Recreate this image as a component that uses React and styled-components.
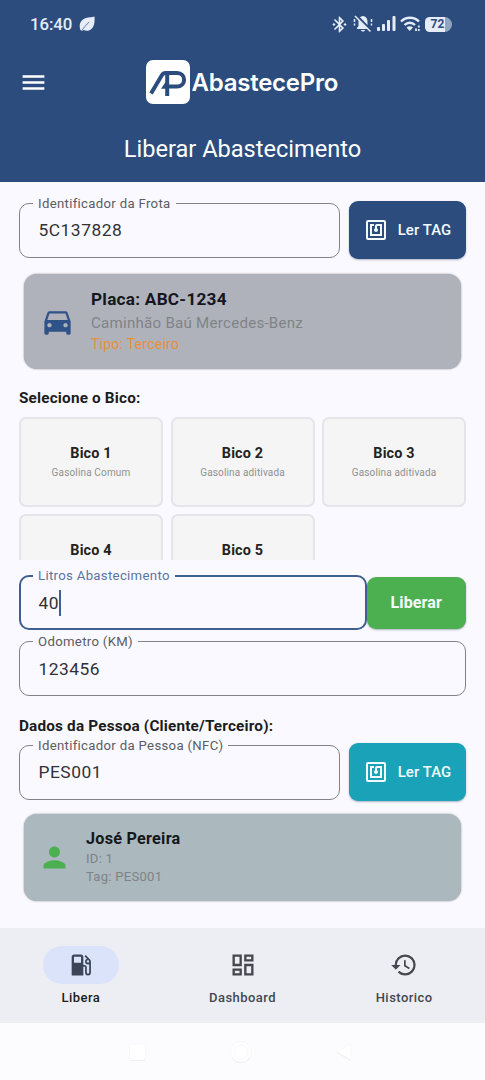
import React from 'react'
import styled, { createGlobalStyle } from 'styled-components'
import {
	MdBluetoothConnected,
	MdDirectionsCar,
	MdHistory,
	MdLocalGasStation,
	MdMenu,
	MdNfc,
	MdOutlineDashboard,
	MdPerson,
} from 'react-icons/md'

const GlobalStyle = createGlobalStyle`
	* { box-sizing: border-box; }
	body { margin: 0; background: #faf9ff; }
	button, input { font-family: inherit; }
`

const Screen = styled.div`
	width: 485px;
	height: 1080px;
	display: flex;
	flex-direction: column;
	overflow: hidden;
	background: #faf9ff;
	color: #1b1c20;
	font-family: Roboto, sans-serif;
`

const Header = styled.header`
	height: 182px;
	flex: none;
	background: #2b4c7c;
	color: #fff;
`

const StatusBar = styled.div`
	height: 48px;
	padding: 0 33px 0 30px;
	display: flex;
	align-items: center;
	justify-content: space-between;
	color: #e6edf8;
`

const Clock = styled.div`
	display: flex;
	align-items: center;
	gap: 7px;
	font-size: 16.8px;
	font-weight: 500;
	line-height: 20px;
	letter-spacing: -0.1px;
`

const StatusIcons = styled.div`
	display: flex;
	align-items: center;
	gap: 4px;

	svg { display: block; }
`

const Battery = styled.div`
	width: 27px;
	height: 15px;
	padding-right: 2px;
	display: flex;
	align-items: center;
	justify-content: center;
	border-radius: 5px 8px 8px 5px;
	background: linear-gradient(90deg, #e6edf8 20px, #91a4c0 20px);
	color: #2b4c7c;
	font-size: 12px;
	font-weight: 700;
`

const Toolbar = styled.div`
	height: 68px;
	padding-left: 19px;
	display: flex;
	align-items: center;
`

const MenuButton = styled.button`
	width: 29px;
	height: 29px;
	padding: 0;
	border: 0;
	background: none;
	color: #fff;
	font-size: 29px;

	svg { display: block; }
`

const Brand = styled.div`
	margin-left: 97.5px;
	display: flex;
	align-items: center;
	gap: 2px;
	font-family: Inter, sans-serif;
	font-size: 24px;
	font-weight: 600;
	letter-spacing: -0.25px;
	white-space: nowrap;

	svg { display: block; }
`

const PageTitle = styled.h1`
	margin: 0;
	padding-top: 17px;
	font-size: 23.6px;
	font-weight: 400;
	line-height: 32px;
	text-align: center;
`

const Content = styled.main`
	height: 746px;
	flex: none;
	padding: 19px 19px 0;
`

const Row = styled.div`
	display: flex;
	align-items: center;
	gap: ${({ $gap }) => $gap || 0}px;
	margin-top: ${({ $top }) => $top || 0}px;
`

const FieldBox = styled.label`
	position: relative;
	flex: 1;
	height: 55px;
	padding: 0 ${({ $focused }) => ($focused ? 17.5 : 18.5)}px;
	display: flex;
	align-items: center;
	border: ${({ $focused }) => ($focused ? '2px solid #3f5f90' : '1px solid #82838a')};
	border-radius: 10px;
	color: #303136;
	font-size: 17.4px;
	letter-spacing: 0.5px;
`

const FieldLabel = styled.span`
	position: absolute;
	top: ${({ $focused }) => ($focused ? -9 : -8)}px;
	left: ${({ $focused }) => ($focused ? 12 : 13)}px;
	padding: 0 5px;
	background: #faf9ff;
	color: ${({ $focused }) => ($focused ? '#5b75a0' : '#5b5c63')};
	font-size: 13.2px;
	line-height: 16px;
	letter-spacing: 0.31px;
	white-space: nowrap;
`

const Caret = styled.i`
	width: 2px;
	height: 26px;
	background: #3f5f90;
`

const Button = styled.button`
	width: ${({ $width }) => $width}px;
	height: ${({ $height }) => $height}px;
	flex: none;
	padding: 0;
	display: flex;
	align-items: center;
	justify-content: center;
	gap: 10px;
	border: 0;
	border-radius: 9px;
	background: ${({ $color }) => $color};
	box-shadow: 0 1px 2px rgba(30, 50, 90, 0.35);
	color: #f4fbff;
	font-size: ${({ $size }) => $size || 14.9}px;
	font-weight: ${({ $weight }) => $weight || 500};
	letter-spacing: 0.1px;

	svg { font-size: 24px; }
`

const Card = styled.section`
	height: ${({ $height }) => $height}px;
	margin: ${({ $top }) => $top}px 5px 0;
	padding-left: ${({ $inset }) => $inset}px;
	display: flex;
	align-items: center;
	gap: ${({ $gap }) => $gap}px;
	border-radius: 13px;
	background: ${({ $color }) => $color};
	box-shadow: 0 0 2px rgba(0, 0, 0, 0.45);
`

const CardBody = styled.div`
	padding-bottom: ${({ $bottom }) => $bottom}px;
`

const CardTitle = styled.div`
	color: #14171c;
	font-size: ${({ $size }) => $size}px;
	font-weight: 700;
	line-height: ${({ $line }) => $line}px;
	letter-spacing: 0.25px;
`

const CardText = styled.div`
	color: ${({ $color }) => $color || '#7f8388'};
	font-size: ${({ $size }) => $size}px;
	line-height: ${({ $line }) => $line}px;
	letter-spacing: 0.25px;
`

const SectionTitle = styled.h2`
	height: 20px;
	margin: ${({ $top }) => $top}px 0 0;
	font-size: 15.3px;
	font-weight: 700;
	line-height: 20px;
	letter-spacing: 0.18px;
`

const NozzleGrid = styled.div`
	height: 143px;
	margin-top: 8.5px;
	display: grid;
	grid-template-columns: repeat(3, 1fr);
	grid-auto-rows: 90px;
	gap: 7.5px;
	overflow: hidden;
`

const Nozzle = styled.div`
	padding-top: 2px;
	display: flex;
	flex-direction: column;
	align-items: center;
	justify-content: center;
	border: 2px solid #e4e4e9;
	border-radius: 7px;
	background: #f5f5f5;
	color: #222;
`

const NozzleName = styled.strong`
	font-size: 14.4px;
	font-weight: 700;
	line-height: 20px;
	letter-spacing: 0.15px;
`

const NozzleFuel = styled.span`
	min-height: 18px;
	color: #909090;
	font-size: 10px;
	line-height: 18px;
	letter-spacing: 0.15px;
`

const NavBar = styled.nav`
	height: 95px;
	flex: none;
	padding-top: 18px;
	display: flex;
	background: #edeef3;
`

const NavItem = styled.div`
	flex: 1;
	display: flex;
	flex-direction: column;
	align-items: center;
	color: ${({ $active }) => ($active ? '#1b1c20' : '#44474e')};
	font-size: 13px;
	font-weight: 500;
	line-height: 18px;
	letter-spacing: 0.46px;
`

const NavIcon = styled.span`
	width: 76px;
	height: 38px;
	margin-bottom: 5px;
	display: flex;
	align-items: center;
	justify-content: center;
	border-radius: 19px;
	background: ${({ $active }) => ($active ? '#dae3fa' : 'transparent')};
	color: ${({ $active }) => ($active ? '#3b4658' : '#44474e')};
	font-size: 28px;
`

const SystemBar = styled.footer`
	height: 57px;
	flex: none;
	background: #fcfbfe;

	svg { display: block; }
`

const Leaf = () => (
	<svg width='16' height='16' viewBox='0 0 16 16'>
		<path d='M15.5.5C16 7 15 13 10 14.5c-2 .6-4 .4-5.300-.4L3 15 1.500 14C-.8 8.500 2 3.500 7 2c3-.9 6-.5 8.500-1.500Z' fill='#e6edf8' />
		<path d='M3 14.500C5 11 7.500 9 10 6' stroke='#2b4c7c' strokeWidth='.7' fill='none' />
	</svg>
)

const MutedBell = () => (
	<svg width='20' height='18' viewBox='0 0 20 18'>
		<path d='M10 1c-3.300.5-4.500 2.800-4.500 6v4L4 13v1h12v-1l-1.500-2V7c0-3.200-1.200-5.500-4.500-6ZM8 15h4c-.5 2-3.500 2-4 0Z' fill='#e6edf8' />
		<path d='M1.500 4v3M1.500 8.500v2M18.500 4v3M18.500 8.500v2' stroke='#e6edf8' strokeWidth='1.500' fill='none' />
		<path d='m3 .5 15 15' stroke='#2b4c7c' strokeWidth='3' />
		<path d='m2 1 15.500 15.500' stroke='#e6edf8' strokeWidth='1.500' />
	</svg>
)

const Signal = () => (
	<svg width='19' height='16' viewBox='0 0 19 16' fill='#e6edf8'>
		<rect y='11' width='3' height='4' rx='1' />
		<rect x='5' y='8' width='3' height='7' rx='1' />
		<rect x='10' y='4' width='3' height='11' rx='1' />
		<rect x='15.500' y='0' width='3' height='15' rx='1' />
	</svg>
)

const Wifi = () => (
	<svg width='21' height='16' viewBox='0 0 21 16'>
		<path d='M1 5.500c5-5 13-5 18 0M4.500 9c3-3 7.500-3 10.500 0' stroke='#e6edf8' strokeWidth='2.300' fill='none' />
		<path d='M6.500 11.500c2-1.700 4.500-1.700 6.500 0L9.700 15Z' fill='#e6edf8' />
		<path d='M16 12.500v2.500M18.800 9.500v2M18.800 13v2' stroke='#e6edf8' strokeWidth='1.800' />
	</svg>
)

const LogoMark = () => (
	<svg width='44' height='44' viewBox='0 0 44 44'>
		<rect width='44' height='44' rx='7' fill='#fff' />
		<g fill='none' stroke='#2b4c7c' strokeWidth='4'>
			<path d='M5 33.500 16 15Q17.200 13 19.500 13H31C40.500 13 40.500 26.500 31 26.500H21' />
			<path d='M21.200 13v23' />
			<path d='m16.500 28 4-6v6Z' strokeWidth='1.500' fill='#2b4c7c' />
		</g>
	</svg>
)

const Field = ({ label, value, focused }) => (
	<FieldBox $focused={focused}>
		<FieldLabel $focused={focused}>{label}</FieldLabel>
		<span>{value}</span>
		{focused && <Caret />}
	</FieldBox>
)

const nozzles = [
	{ name: 'Bico 1', fuel: 'Gasolina Comum' },
	{ name: 'Bico 2', fuel: 'Gasolina aditivada' },
	{ name: 'Bico 3', fuel: 'Gasolina aditivada' },
	{ name: 'Bico 4' },
	{ name: 'Bico 5' },
]

const tabs = [
	{ label: 'Libera', icon: MdLocalGasStation, active: true },
	{ label: 'Dashboard', icon: MdOutlineDashboard },
	{ label: 'Historico', icon: MdHistory },
]

const App = () => {
	return (
		<Screen>
			<GlobalStyle />
			<Header>
				<StatusBar>
					<Clock>16:40 <Leaf /></Clock>
					<StatusIcons>
						<MdBluetoothConnected size={19} />
						<MutedBell />
						<Signal />
						<Wifi />
						<Battery>72</Battery>
					</StatusIcons>
				</StatusBar>
				<Toolbar>
					<MenuButton aria-label='Menu'><MdMenu /></MenuButton>
					<Brand><LogoMark />AbastecePro</Brand>
				</Toolbar>
				<PageTitle>Liberar Abastecimento</PageTitle>
			</Header>

			<Content>
				<Row $gap={9}>
					<Field label='Identificador da Frota' value='5C137828' />
					<Button $width={117} $height={58} $color='#2b4c7c'><MdNfc />Ler TAG</Button>
				</Row>
				<Card $top={15} $height={95} $inset={16} $gap={16} $color='#afb2bb'>
					<MdDirectionsCar size={35} color='#2f5288' />
					<CardBody $bottom={3}>
						<CardTitle $size={17.2} $line={25}>Placa: ABC-1234</CardTitle>
						<CardText $size={15.1} $line={22}>Caminhão Baú Mercedes-Benz</CardText>
						<CardText $size={14} $line={20} $color='#e98f38'>Tipo: Terceiro</CardText>
					</CardBody>
				</Card>

				<SectionTitle $top={19}>Selecione o Bico:</SectionTitle>
				<NozzleGrid>
					{nozzles.map(({ name, fuel }) => (
						<Nozzle key={name}>
							<NozzleName>{name}</NozzleName>
							<NozzleFuel>{fuel}</NozzleFuel>
						</Nozzle>
					))}
				</NozzleGrid>

				<Row $top={15.5}>
					<Field label='Litros Abastecimento' value='40' focused />
					<Button $width={99.5} $height={52} $color='#4caf50' $size={16} $weight={700}>Liberar</Button>
				</Row>
				<Row $top={11}>
					<Field label='Odometro (KM)' value='123456' />
				</Row>

				<SectionTitle $top={19.5}>Dados da Pessoa (Cliente/Terceiro):</SectionTitle>
				<Row $top={7.5} $gap={9}>
					<Field label='Identificador da Pessoa (NFC)' value='PES001' />
					<Button $width={117} $height={58} $color='#19a2b8'><MdNfc />Ler TAG</Button>
				</Row>
				<Card $top={13} $height={87} $inset={14} $gap={15} $color='#abb8be'>
					<MdPerson size={33} color='#4caf50' />
					<CardBody $bottom={1}>
						<CardTitle $size={16.2} $line={22}>José Pereira</CardTitle>
						<CardText $size={13.1} $line={18}>ID: 1</CardText>
						<CardText $size={13.1} $line={18}>Tag: PES001</CardText>
					</CardBody>
				</Card>
			</Content>

			<NavBar>
				{tabs.map(({ label, icon: Icon, active }) => (
					<NavItem key={label} $active={active}>
						<NavIcon $active={active}><Icon /></NavIcon>
						{label}
					</NavItem>
				))}
			</NavBar>
			<SystemBar>
				<svg width='485' height='57' viewBox='0 0 485 57' fill='#fff'>
					<g stroke='#f8f7fa'>
						<rect x='129.500' y='21' width='16' height='16' rx='2' />
						<circle cx='241' cy='29' r='10.500' />
						<circle cx='241' cy='29' r='7' />
						<path d='M351 21v16l-14-8Z' />
					</g>
					<path d='M130 37.500h15M232 34.500c4 7 14 7 18 0M337 29.500l14 8' fill='none' stroke='#efeef1' />
				</svg>
			</SystemBar>
		</Screen>
	)
}

export default App
